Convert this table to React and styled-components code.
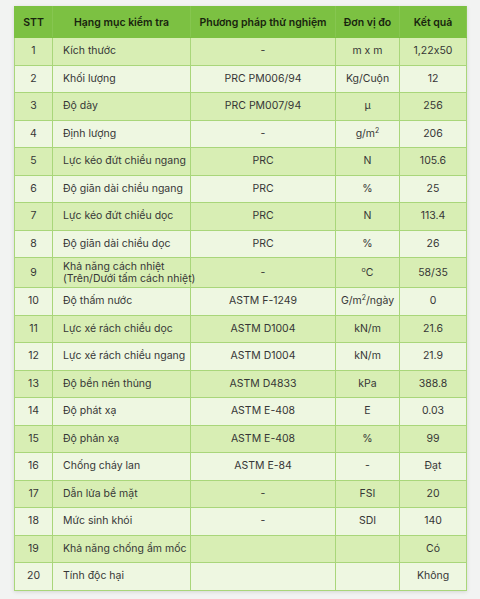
import React from "react";
import styled, { createGlobalStyle } from "styled-components";

const GlobalStyle = createGlobalStyle`
  html, body { margin: 0; padding: 0; background: #f2f3f2; }
  body { font-family: Inter, "Liberation Sans", Arial, sans-serif; font-feature-settings: "calt" 0; }
`;

const Page = styled.div`
  padding: 6px 14px 10px 14px;
`;

const Table = styled.table`
  width: 452px;
  border-collapse: collapse;
  table-layout: fixed;
  box-shadow: 0 1px 4px rgba(0, 0, 0, 0.12);
  font-size: 10.5px;
  color: #363636;
`;

const HeadCell = styled.th`
  background: #7cc142;
  color: #18240e;
  font-weight: 600;
  height: 30px;
  padding: 0 2px;
  text-align: center;
  border: 1px solid #7cc142;
  border-right-color: #86c650;
  font-size: 10.5px;
  white-space: nowrap;
`;

const Row = styled.tr`
  background: ${(p) => (p.$odd ? "#d8eeb4" : "#eef7e1")};
`;

const Cell = styled.td`
  border: 1px solid #a9d67a;
  height: ${(p) => (p.$tall ? "29px" : "26.5px")};
  padding: 0 ${(p) => (p.$left ? "10px" : "3px")};
  text-align: ${(p) => (p.$left ? "left" : "center")};
  vertical-align: middle;
  line-height: ${(p) => (p.$tall ? "11.5px" : "14px")};
  white-space: nowrap;
`;

const Sup = styled.sup`
  font-size: 7px;
  line-height: 0;
`;

const rows = [
  ["1", "Kích thước", "-", "m x m", "1,22x50"],
  ["2", "Khối lượng", "PRC PM006/94", "Kg/Cuộn", "12"],
  ["3", "Độ dày", "PRC PM007/94", "µ", "256"],
  ["4", "Định lượng", "-", <>g/m<Sup>2</Sup></>, "206"],
  ["5", "Lực kéo đứt chiều ngang", "PRC", "N", "105.6"],
  ["6", "Độ giãn dài chiều ngang", "PRC", "%", "25"],
  ["7", "Lực kéo đứt chiều dọc", "PRC", "N", "113.4"],
  ["8", "Độ giãn dài chiều dọc", "PRC", "%", "26"],
  ["9", <>Khả năng cách nhiệt<br />(Trên/Dưới tấm cách nhiệt)</>, "-", <><Sup>o</Sup>C</>, "58/35", true],
  ["10", "Độ thấm nước", "ASTM F-1249", <>G/m<Sup>2</Sup>/ngày</>, "0"],
  ["11", "Lực xé rách chiều dọc", "ASTM D1004", "kN/m", "21.6"],
  ["12", "Lực xé rách chiều ngang", "ASTM D1004", "kN/m", "21.9"],
  ["13", "Độ bền nén thủng", "ASTM D4833", "kPa", "388.8"],
  ["14", "Độ phát xạ", "ASTM E-408", "E", "0.03"],
  ["15", "Độ phản xạ", "ASTM E-408", "%", "99"],
  ["16", "Chống cháy lan", "ASTM E-84", "-", "Đạt"],
  ["17", "Dẫn lửa bề mặt", "-", "FSI", "20"],
  ["18", "Mức sinh khói", "-", "SDI", "140"],
  ["19", "Khả năng chống ẩm mốc", "", "", "Có"],
  ["20", "Tính độc hại", "", "", "Không"],
];

export default function App() {
  return (
    <Page>
      <GlobalStyle />
      <Table>
        <colgroup>
          <col style={{ width: 38 }} />
          <col style={{ width: 138 }} />
          <col style={{ width: 145 }} />
          <col style={{ width: 64 }} />
          <col style={{ width: 67 }} />
        </colgroup>
        <thead>
          <tr>
            <HeadCell>STT</HeadCell>
            <HeadCell>Hạng mục kiểm tra</HeadCell>
            <HeadCell>Phương pháp thử nghiệm</HeadCell>
            <HeadCell>Đơn vị đo</HeadCell>
            <HeadCell>Kết quả</HeadCell>
          </tr>
        </thead>
        <tbody>
          {rows.map((r, i) => (
            <Row key={i} $odd={i % 2 === 0}>
              <Cell $tall={r[5]}>{r[0]}</Cell>
              <Cell $tall={r[5]} $left>{r[1]}</Cell>
              <Cell $tall={r[5]}>{r[2]}</Cell>
              <Cell $tall={r[5]}>{r[3]}</Cell>
              <Cell $tall={r[5]}>{r[4]}</Cell>
            </Row>
          ))}
        </tbody>
      </Table>
    </Page>
  );
}
